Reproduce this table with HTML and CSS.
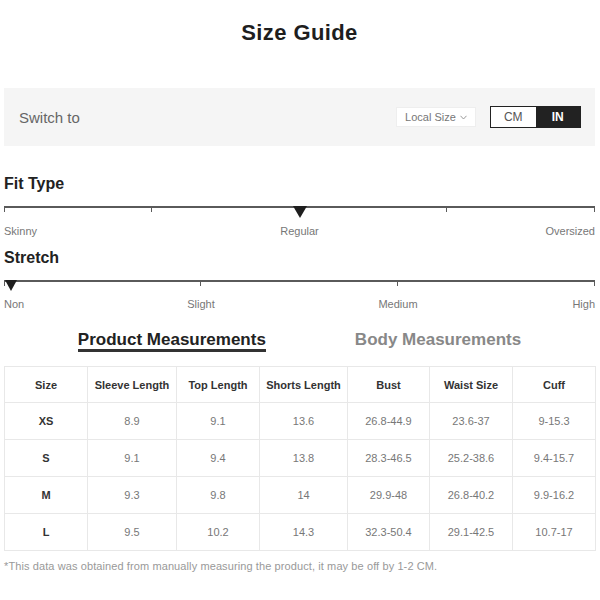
FILE: index.html
```html
<!DOCTYPE html>
<html lang="en">
<head>
<meta charset="utf-8">
<title>Size Guide</title>
<link rel="stylesheet" href="styles.css">
</head>
<body>
<div class="page">
  <h1 class="title">Size Guide</h1>

  <div class="switch-bar">
    <span class="switch-label">Switch to</span>
    <div class="controls">
      <div class="local-size">Local Size
        <svg class="chev" width="7" height="5" viewBox="0 0 7 5"><path d="M0.5 0.8 L3.5 4 L6.5 0.8" fill="none" stroke="#999" stroke-width="1"/></svg>
      </div>
      <div class="unit-toggle">
        <span class="unit">CM</span>
        <span class="unit active">IN</span>
      </div>
    </div>
  </div>

  <section class="attr attr-fit">
    <h2 class="attr-title">Fit Type</h2>
    <div class="scale scale-4">
      <span class="seg"></span><span class="seg"></span><span class="seg"></span><span class="seg"></span>
      <span class="marker marker-mid"></span>
    </div>
    <div class="labels labels-4">
      <span class="lab lab-start">Skinny</span>
      <span class="lab lab-mid2">Regular</span>
      <span class="lab lab-end8">Oversized</span>
    </div>
  </section>

  <section class="attr attr-stretch">
    <h2 class="attr-title">Stretch</h2>
    <div class="scale scale-3">
      <span class="seg"></span><span class="seg"></span><span class="seg"></span>
      <span class="marker marker-start"></span>
    </div>
    <div class="labels labels-3">
      <span class="lab lab-start">Non</span>
      <span class="lab lab-a">Slight</span>
      <span class="lab lab-b">Medium</span>
      <span class="lab lab-end6">High</span>
    </div>
  </section>

  <div class="tabs">
    <span class="tab active">Product Measurements</span>
    <span class="tab">Body Measurements</span>
  </div>

  <table class="size-table">
    <colgroup>
      <col class="c1"><col class="c2"><col class="c3"><col class="c4"><col class="c5"><col class="c6"><col class="c7">
    </colgroup>
    <thead>
      <tr><th>Size</th><th>Sleeve Length</th><th>Top Length</th><th>Shorts Length</th><th>Bust</th><th>Waist Size</th><th>Cuff</th></tr>
    </thead>
    <tbody>
      <tr><td class="sz">XS</td><td>8.9</td><td>9.1</td><td>13.6</td><td>26.8-44.9</td><td>23.6-37</td><td>9-15.3</td></tr>
      <tr><td class="sz">S</td><td>9.1</td><td>9.4</td><td>13.8</td><td>28.3-46.5</td><td>25.2-38.6</td><td>9.4-15.7</td></tr>
      <tr><td class="sz">M</td><td>9.3</td><td>9.8</td><td>14</td><td>29.9-48</td><td>26.8-40.2</td><td>9.9-16.2</td></tr>
      <tr><td class="sz">L</td><td>9.5</td><td>10.2</td><td>14.3</td><td>32.3-50.4</td><td>29.1-42.5</td><td>10.7-17</td></tr>
    </tbody>
  </table>

  <p class="note">*This data was obtained from manually measuring the product, it may be off by 1-2 CM.</p>
</div>
</body>
</html>
```

FILE: styles.css
```css
* { box-sizing: border-box; }
html, body { margin: 0; padding: 0; background: #fff; }
body { font-family: "Liberation Sans", Arial, sans-serif; color: #333; }

.page { width: 591px; margin: 0 5px 0 4px; }

.title {
  margin: 0 0 43px;
  padding-top: 21px;
  font-size: 22px;
  line-height: 24px;
  font-weight: bold;
  letter-spacing: 0.4px;
  text-align: center;
  color: #1e1e1e;
}

.switch-bar {
  height: 58px;
  background: #f5f5f5;
  display: flex;
  align-items: center;
  justify-content: space-between;
  padding: 0 14px 0 15px;
}
.switch-label { font-size: 15px; color: #666; }
.controls { display: flex; align-items: center; gap: 14px; }
.local-size {
  width: 80px; height: 20px;
  background: #fff;
  border: 1px solid #eee;
  font-size: 11px; color: #777;
  display: flex; align-items: center; justify-content: center; gap: 4px;
}
.chev { display: block; margin-top: 1px; }
.unit-toggle {
  display: flex; width: 91px; height: 22px;
  border: 1px solid #222;
}
.unit {
  flex: 1; display: flex; align-items: center; justify-content: center;
  font-size: 12px; color: #555; background: #fff;
}
.unit.active { background: #222; color: #fff; font-weight: bold; }

.attr-fit { margin-top: 28px; }
.attr-stretch { margin-top: 10px; }
.attr-title {
  margin: 0; font-size: 16px; line-height: 20px; font-weight: bold; color: #222;
}
.scale { position: relative; display: grid; margin-top: 12px; }
.attr-stretch .scale { margin-top: 12px; }
.scale-4 { grid-template-columns: repeat(4, 1fr); }
.scale-3 { grid-template-columns: repeat(3, 1fr); }
.seg { height: 6px; border-top: 2px solid #5a5a5a; border-right: 1px solid #5a5a5a; }
.seg:first-child { border-left: 1px solid #5a5a5a; }

.marker {
  position: absolute; top: 0;
  width: 0; height: 0;
  border-left: 7px solid transparent;
  border-right: 7px solid transparent;
  border-top: 12px solid #1e1e1e;
}
.marker-mid { left: calc(50% - 7px); }
.marker-start { left: 1px; border-left-width: 6px; border-right-width: 6px; border-top-width: 11px; }

.labels { display: grid; margin-top: 12px; font-size: 11px; line-height: 14px; color: #777; white-space: nowrap; }
.attr-stretch .labels { margin-top: 11px; }
.labels-4 { grid-template-columns: repeat(8, 1fr); }
.labels-3 { grid-template-columns: repeat(6, 1fr); }
.lab-start { grid-column: 1 / 2; justify-self: start; }
.lab-mid2 { grid-column: 4 / 6; justify-self: center; }
.lab-end8 { grid-column: 8 / 9; justify-self: end; }
.lab-a { grid-column: 2 / 4; justify-self: center; }
.lab-b { grid-column: 4 / 6; justify-self: center; }
.lab-end6 { grid-column: 6 / 7; justify-self: end; }

.tabs { display: flex; justify-content: center; gap: 89px; margin-top: 19px; }
.tab { font-size: 17px; line-height: 19px; font-weight: bold; color: #888; border-bottom: 3px solid transparent; }
.tab.active { color: #222; border-bottom-color: #333; }

.size-table {
  margin-top: 14px;
  width: 591px;
  table-layout: fixed;
  border-collapse: collapse;
  border: 1px solid #e8e8e8;
}
.c1 { width: 83px; } .c2 { width: 89px; } .c3 { width: 83px; } .c4 { width: 88px; }
.c5 { width: 82px; } .c6 { width: 83px; } .c7 { width: 83px; }
.size-table th, .size-table td {
  height: 37px; padding: 0;
  border: 1px solid #e8e8e8;
  text-align: center;
  white-space: nowrap;
}
.size-table th { height: 36px; font-size: 11px; font-weight: bold; color: #333; }
.size-table td { font-size: 11px; color: #777; }
.size-table td.sz { font-weight: bold; color: #333; }

.note { margin: 9px 0 0; font-size: 11px; line-height: 13px; letter-spacing: 0.1px; color: #999; }
```
